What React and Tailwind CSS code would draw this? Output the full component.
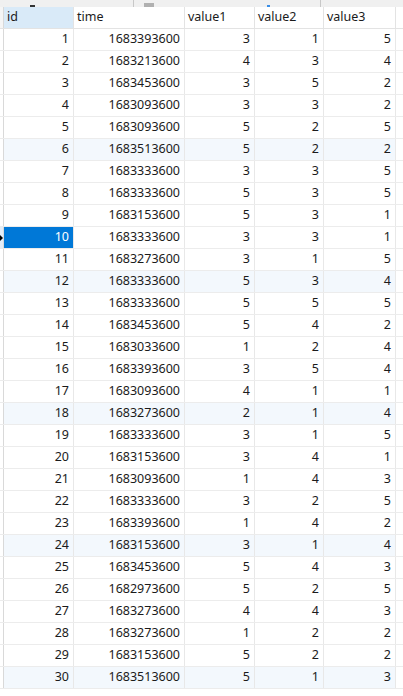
import React from 'react';

const rows = [
  [1, 1683393600, 3, 1, 5],
  [2, 1683213600, 4, 3, 4],
  [3, 1683453600, 3, 5, 2],
  [4, 1683093600, 3, 3, 2],
  [5, 1683093600, 5, 2, 5],
  [6, 1683513600, 5, 2, 2],
  [7, 1683333600, 3, 3, 5],
  [8, 1683333600, 5, 3, 5],
  [9, 1683153600, 5, 3, 1],
  [10, 1683333600, 3, 3, 1],
  [11, 1683273600, 3, 1, 5],
  [12, 1683333600, 5, 3, 4],
  [13, 1683333600, 5, 5, 5],
  [14, 1683453600, 5, 4, 2],
  [15, 1683033600, 1, 2, 4],
  [16, 1683393600, 3, 5, 4],
  [17, 1683093600, 4, 1, 1],
  [18, 1683273600, 2, 1, 4],
  [19, 1683333600, 3, 1, 5],
  [20, 1683153600, 3, 4, 1],
  [21, 1683093600, 1, 4, 3],
  [22, 1683333600, 3, 2, 5],
  [23, 1683393600, 1, 4, 2],
  [24, 1683153600, 3, 1, 4],
  [25, 1683453600, 5, 4, 3],
  [26, 1682973600, 5, 2, 5],
  [27, 1683273600, 4, 4, 3],
  [28, 1683273600, 1, 2, 2],
  [29, 1683153600, 5, 2, 2],
  [30, 1683513600, 5, 1, 3],
];

const cols = 'grid grid-cols-[4px_70px_111px_70px_69px_72px_7px]';

const Toolbar = () => (
  <div className="flex h-[7px] items-end bg-[#f0f0f0]">
    <div className="ml-[30px] h-[2px] w-[5px] bg-[#333]" />
    <div className="ml-[98px] h-[7px] w-px bg-[#c8c8c8]" />
    <div className="ml-[10px] h-[4px] w-[10px] bg-[#b0b0b0]" />
    <div className="ml-[113px] h-[2px] w-[3px] bg-[#3a8ee6]" />
    <div className="ml-[50px] h-[7px] w-px bg-[#c8c8c8]" />
  </div>
);

const Header = () => (
  <div className={`${cols} h-[22px] border-b border-[#e3e3e3]`}>
    <div className="border-r border-[#d9d9d9] bg-[#f5f5f5]" />
    <div className="flex items-center border-r border-[#e3e3e3] bg-[#d9eaf8] pl-[3px]">id</div>
    <div className="flex items-center border-r border-[#e3e3e3] pl-[3px]">time</div>
    <div className="flex items-center border-r border-[#e3e3e3] pl-[3px]">value1</div>
    <div className="flex items-center border-r border-[#e3e3e3] pl-[3px]">value2</div>
    <div className="flex items-center border-r border-[#e3e3e3] pl-[3px]">value3</div>
    <div />
  </div>
);

const Row = ({ r }) => {
  const [id, time, v1, v2, v3] = r;
  const selected = id === 10;
  const tinted = id % 6 === 0;
  const bg = tinted ? 'bg-[#f3f8fd]' : 'bg-white';
  const cell = 'flex items-center justify-end border-r border-[#e8e8e8] pr-[4px]';
  return (
    <div className={`${cols} h-[22px] border-b border-[#ececec] ${bg}`}>
      <div className={`flex items-center border-r border-[#d9d9d9] ${selected ? 'bg-[#e3edf8]' : 'bg-white'}`}>
        {selected && <div className="h-0 w-0 border-y-[3px] border-l-[3px] border-y-transparent border-l-black" />}
      </div>
      <div className={`${cell} ${selected ? 'bg-[#0078d7] text-white' : ''}`}>{id}</div>
      <div className={cell}>{time}</div>
      <div className={cell}>{v1}</div>
      <div className={cell}>{v2}</div>
      <div className={cell}>{v3}</div>
      <div className="bg-white" />
    </div>
  );
};

const App = () => {
  return (
    <main className="h-[696px] w-[403px] overflow-hidden bg-white text-[12.5px] text-[#1b1b1b] [font-family:'Noto_Sans',sans-serif]">
      <Toolbar />
      <Header />
      {rows.map((r) => (
        <Row key={r[0]} r={r} />
      ))}
    </main>
  );
};

export default App;
